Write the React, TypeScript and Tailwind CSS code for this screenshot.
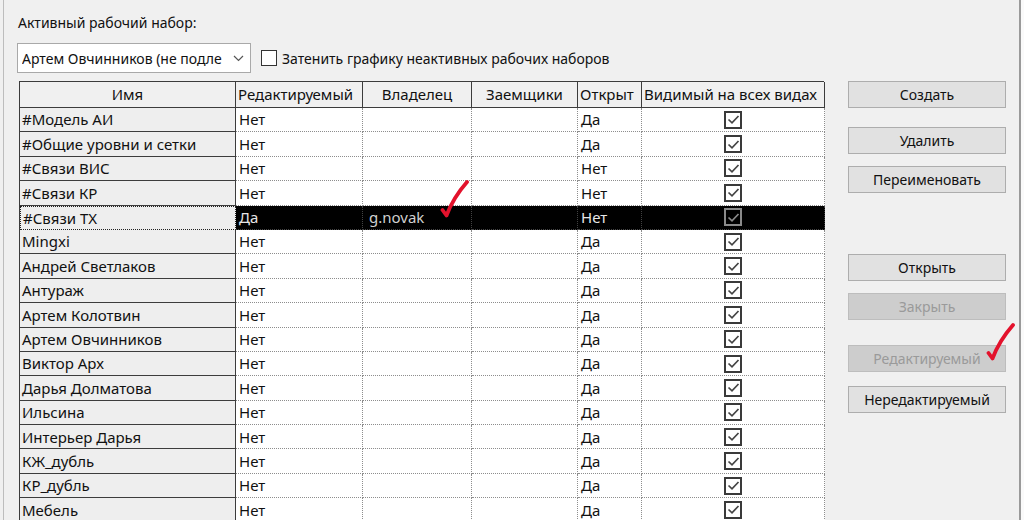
import React from "react";

const rows: { name: string; ed: string; owner: string; open: string; sel?: boolean }[] = [
  { name: "#Модель АИ", ed: "Нет", owner: "", open: "Да" },
  { name: "#Общие уровни и сетки", ed: "Нет", owner: "", open: "Да" },
  { name: "#Связи ВИС", ed: "Нет", owner: "", open: "Нет" },
  { name: "#Связи КР", ed: "Нет", owner: "", open: "Нет" },
  { name: "#Связи ТХ", ed: "Да", owner: "g.novak", open: "Нет", sel: true },
  { name: "Mingxi", ed: "Нет", owner: "", open: "Да" },
  { name: "Андрей Светлаков", ed: "Нет", owner: "", open: "Да" },
  { name: "Антураж", ed: "Нет", owner: "", open: "Да" },
  { name: "Артем Колотвин", ed: "Нет", owner: "", open: "Да" },
  { name: "Артем Овчинников", ed: "Нет", owner: "", open: "Да" },
  { name: "Виктор Арх", ed: "Нет", owner: "", open: "Да" },
  { name: "Дарья Долматова", ed: "Нет", owner: "", open: "Да" },
  { name: "Ильсина", ed: "Нет", owner: "", open: "Да" },
  { name: "Интерьер Дарья", ed: "Нет", owner: "", open: "Да" },
  { name: "КЖ_дубль", ed: "Нет", owner: "", open: "Да" },
  { name: "КР_дубль", ed: "Нет", owner: "", open: "Да" },
  { name: "Мебель", ed: "Нет", owner: "", open: "Да" },
];

function Check({ sel }: { sel?: boolean }) {
  return (
    <div
      className={
        "w-[18px] h-[18px] border-2 flex items-center justify-center " +
        (sel ? "border-[#8a8a8a] bg-black" : "border-[#3a3a3a] bg-white")
      }
    >
      <svg width="13" height="11" viewBox="0 0 13 11">
        <path
          d="M1.5 5.5 L5 8.8 L11.5 2"
          fill="none"
          stroke={sel ? "#8a8a8a" : "#444"}
          strokeWidth="1.7"
        />
      </svg>
    </div>
  );
}

function Btn({ label, disabled }: { label: string; disabled?: boolean }) {
  return (
    <div
      className={
        "w-[158px] h-[27px] flex items-center justify-center border text-[14px] " +
        (disabled
          ? "bg-[#cdcdcd] border-[#bdbdbd] text-[#9a9a9a]"
          : "bg-[#e1e1e1] border-[#adadad] text-[#111]")
      }
    >
      {label}
    </div>
  );
}

function RedCheck({ className }: { className: string }) {
  return (
    <svg className={className} width="30" height="40" viewBox="0 0 30 40">
      <path
        d="M2.5 31 L6.5 36.5 Q13 19 27 3"
        fill="none"
        stroke="#e3122c"
        strokeWidth="3.8"
        strokeLinecap="round"
        strokeLinejoin="round"
      />
    </svg>
  );
}

const dataBase =
  "border-r border-b border-dotted border-[#8d8d8d] flex items-center overflow-hidden whitespace-nowrap";

export default function App() {
  return (
    <div
      className="w-[1024px] h-[520px] bg-[#f0f0f0] overflow-hidden relative text-[#111]"
      style={{ fontFamily: '"Noto Sans", "Open Sans", sans-serif' }}
    >
      <div className="absolute left-[3px] top-0 bottom-0 w-px bg-[#bdbdbd]" />
      <div className="absolute left-[1019px] top-0 bottom-0 w-[2px] bg-[#9a9a9a]" />
      <div className="absolute left-[1021px] top-0 bottom-0 w-[3px] bg-[#fafafa]" />

      <div className="flex pl-[17px] pt-[14px]">
        <div className="flex flex-col w-[807px]">
          <div className="text-[14px] leading-[18px] ml-[1px]">Активный рабочий набор:</div>
          <div className="flex items-center mt-[11px]">
            <div className="w-[234px] h-[30px] bg-white border border-[#a9a9a9] flex items-center pl-[4px] pr-[6px]">
              <span className="text-[14px] flex-1 whitespace-nowrap overflow-hidden">Артем Овчинников (не подле</span>
              <svg width="11" height="7" viewBox="0 0 11 7" className="ml-[4px]">
                <path d="M1 1 L5.5 5.5 L10 1" fill="none" stroke="#555" strokeWidth="1.2" />
              </svg>
            </div>
            <div className="ml-[10px] w-[16px] h-[16px] bg-white border border-[#333]" />
            <div className="ml-[5px] text-[14px]">Затенить графику неактивных рабочих наборов</div>
          </div>

          <div className="mt-[8px] ml-[2px] w-[805px] border-l border-t border-[#3c3c3c]">
            <div className="grid grid-cols-[216px_127px_109px_106px_64px_183px] h-[26px] text-[15px]">
              {["Имя", "Редактируемый", "Владелец", "Заемщики", "Открыт", "Видимый на всех видах"].map((h, i) => (
                <div
                  key={i}
                  className={
                    "bg-[#f0f0f0] border-r border-b border-[#3c3c3c] flex items-center whitespace-nowrap overflow-hidden " +
                    (i === 1 || i === 4 || i === 5 ? "justify-start pl-[2px]" : "justify-center")
                  }
                >
                  {h}
                </div>
              ))}
            </div>
            {rows.map((r, idx) => (
              <div
                key={idx}
                className="grid grid-cols-[216px_127px_109px_106px_64px_183px] h-[24.4px] text-[15px]"
              >
                <div
                  className={
                    "bg-[#eeeeee] flex items-center pl-[2px] whitespace-nowrap " +
                    (r.sel
                      ? "border border-dotted border-[#222]"
                      : "border-r border-b border-[#3c3c3c]")
                  }
                >
                  {r.name}
                </div>
                <div className={dataBase + " pl-[3px]" + (r.sel ? " bg-black text-[#e6e6e6] border-[#444]" : " bg-white")}>{r.ed}</div>
                <div className={dataBase + " pl-[6px]" + (r.sel ? " bg-black text-[#d0d0d0] border-[#444]" : " bg-white")}>
                  {r.owner}
                </div>
                <div className={dataBase + (r.sel ? " bg-black border-[#444]" : " bg-white")} />
                <div className={dataBase + " pl-[3px]" + (r.sel ? " bg-black text-[#e6e6e6] border-[#444]" : " bg-white")}>{r.open}</div>
                <div className={dataBase + " justify-center" + (r.sel ? " bg-black border-[#444]" : " bg-white")}>
                  <Check sel={r.sel} />
                </div>
              </div>
            ))}
          </div>
        </div>

        <div className="flex flex-col ml-[24px] pt-[67px]">
          <Btn label="Создать" />
          <div className="h-[19px]" />
          <Btn label="Удалить" />
          <div className="h-[12px]" />
          <Btn label="Переименовать" />
          <div className="h-[61px]" />
          <Btn label="Открыть" />
          <div className="h-[12px]" />
          <Btn label="Закрыть" disabled />
          <div className="h-[25px]" />
          <Btn label="Редактируемый" disabled />
          <div className="h-[14px]" />
          <Btn label="Нередактируемый" />
        </div>
      </div>

      <RedCheck className="absolute left-[440px] top-[179px]" />
      <RedCheck className="absolute left-[986px] top-[322px]" />
    </div>
  );
}
